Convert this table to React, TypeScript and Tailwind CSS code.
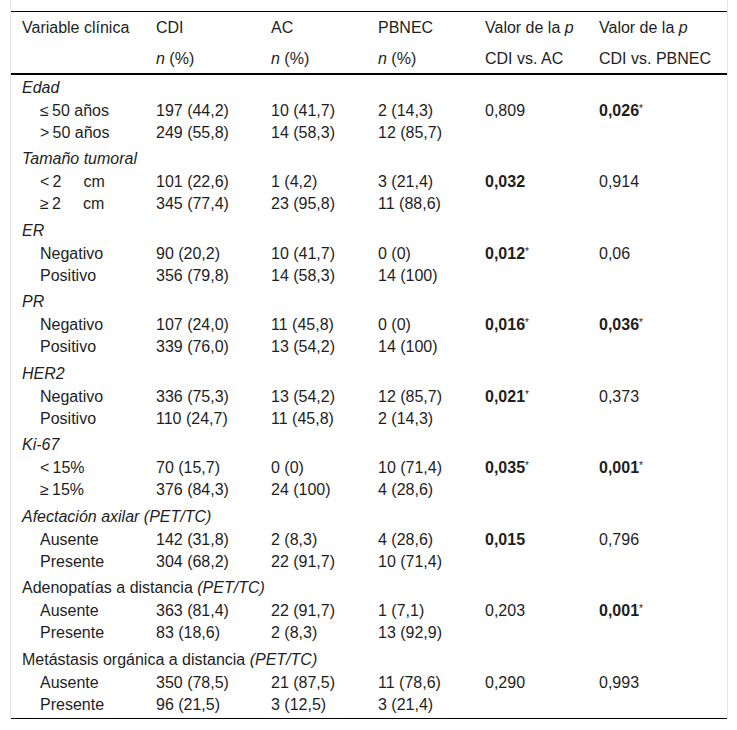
import React from "react";

type Sub = { label: React.ReactNode; v: [string, string, string]; p1?: React.ReactNode; p2?: React.ReactNode };
type Group = { cat: React.ReactNode; rows: [Sub, Sub] };

const B = ({ t, star }: { t: string; star?: boolean }) => (
  <span>
    <b className="font-bold">{t}</b>
    {star ? <span className="relative -top-[4px] text-[10px] leading-none">*</span> : null}
  </span>
);

const cm = (sym: string) => (
  <span>
    {sym}
    {"\u2009"}2<span className="ml-[22px]">cm</span>
  </span>
);

const groups: Group[] = [
  {
    cat: <i>Edad</i>,
    rows: [
      { label: "\u2264\u200950 años", v: ["197 (44,2)", "10 (41,7)", "2 (14,3)"], p1: "0,809", p2: <B t="0,026" star /> },
      { label: ">\u200950 años", v: ["249 (55,8)", "14 (58,3)", "12 (85,7)"] },
    ],
  },
  {
    cat: <i>Tamaño tumoral</i>,
    rows: [
      { label: cm("<"), v: ["101 (22,6)", "1 (4,2)", "3 (21,4)"], p1: <B t="0,032" />, p2: "0,914" },
      { label: cm("\u2265"), v: ["345 (77,4)", "23 (95,8)", "11 (88,6)"] },
    ],
  },
  {
    cat: <i>ER</i>,
    rows: [
      { label: "Negativo", v: ["90 (20,2)", "10 (41,7)", "0 (0)"], p1: <B t="0,012" star />, p2: "0,06" },
      { label: "Positivo", v: ["356 (79,8)", "14 (58,3)", "14 (100)"] },
    ],
  },
  {
    cat: <i>PR</i>,
    rows: [
      { label: "Negativo", v: ["107 (24,0)", "11 (45,8)", "0 (0)"], p1: <B t="0,016" star />, p2: <B t="0,036" star /> },
      { label: "Positivo", v: ["339 (76,0)", "13 (54,2)", "14 (100)"] },
    ],
  },
  {
    cat: <i>HER2</i>,
    rows: [
      { label: "Negativo", v: ["336 (75,3)", "13 (54,2)", "12 (85,7)"], p1: <B t="0,021" star />, p2: "0,373" },
      { label: "Positivo", v: ["110 (24,7)", "11 (45,8)", "2 (14,3)"] },
    ],
  },
  {
    cat: <i>Ki-67</i>,
    rows: [
      { label: "<\u200915%", v: ["70 (15,7)", "0 (0)", "10 (71,4)"], p1: <B t="0,035" star />, p2: <B t="0,001" star /> },
      { label: "\u2265\u200915%", v: ["376 (84,3)", "24 (100)", "4 (28,6)"] },
    ],
  },
  {
    cat: <i>Afectación axilar (PET/TC)</i>,
    rows: [
      { label: "Ausente", v: ["142 (31,8)", "2 (8,3)", "4 (28,6)"], p1: <B t="0,015" />, p2: "0,796" },
      { label: "Presente", v: ["304 (68,2)", "22 (91,7)", "10 (71,4)"] },
    ],
  },
  {
    cat: (
      <span>
        Adenopatías a distancia <i>(PET/TC)</i>
      </span>
    ),
    rows: [
      { label: "Ausente", v: ["363 (81,4)", "22 (91,7)", "1 (7,1)"], p1: "0,203", p2: <B t="0,001" star /> },
      { label: "Presente", v: ["83 (18,6)", "2 (8,3)", "13 (92,9)"] },
    ],
  },
  {
    cat: (
      <span>
        Metástasis orgánica a distancia <i>(PET/TC)</i>
      </span>
    ),
    rows: [
      { label: "Ausente", v: ["350 (78,5)", "21 (87,5)", "11 (78,6)"], p1: "0,290", p2: "0,993" },
      { label: "Presente", v: ["96 (21,5)", "3 (12,5)", "3 (21,4)"] },
    ],
  },
];

const grid = "grid grid-cols-[134px_115px_107px_107px_114px_138px]";

function Row({ s, h }: { s: Sub; h: string }) {
  return (
    <div className={`${grid} ${h} items-center`}>
      <div className="pl-[29px] whitespace-nowrap">{s.label}</div>
      <div className="pl-[11px] whitespace-nowrap">{s.v[0]}</div>
      <div className="pl-[11px] whitespace-nowrap">{s.v[1]}</div>
      <div className="pl-[11px] whitespace-nowrap">{s.v[2]}</div>
      <div className="pl-[11px] whitespace-nowrap">{s.p1}</div>
      <div className="pl-[11px] whitespace-nowrap">{s.p2}</div>
    </div>
  );
}

export default function App() {
  return (
    <div className="bg-white min-h-[730px]">
      <div
        className="ml-[10px] w-[718px] border-x border-[#e6e6e6] pt-[11px] text-[16px] text-[#1e1e1e] leading-[18px]"
        style={{ fontFamily: '"Liberation Sans", Arial, sans-serif' }}
      >
        <div className="border-t border-black">
          <div className={`${grid} h-[32px] items-center`}>
            <div className="pl-[11px] whitespace-nowrap">Variable clínica</div>
            <div className="pl-[11px]">CDI</div>
            <div className="pl-[11px]">AC</div>
            <div className="pl-[11px]">PBNEC</div>
            <div className="pl-[11px] whitespace-nowrap">
              Valor de la <i>p</i>
            </div>
            <div className="pl-[11px] whitespace-nowrap">
              Valor de la <i>p</i>
            </div>
          </div>
          <div className={`${grid} h-[31px] items-center border-b-2 border-black`}>
            <div />
            <div className="pl-[11px]">
              <i>n</i> (%)
            </div>
            <div className="pl-[11px]">
              <i>n</i> (%)
            </div>
            <div className="pl-[11px]">
              <i>n</i> (%)
            </div>
            <div className="pl-[11px] whitespace-nowrap">CDI vs. AC</div>
            <div className="pl-[11px] whitespace-nowrap">CDI vs. PBNEC</div>
          </div>
          <div className="border-b border-black">
            {groups.map((g, i) => (
              <div key={i} className={i % 2 === 1 ? "pb-[3px]" : "pb-[2px]"}>
                <div className="h-[25px] flex items-center pl-[11px] whitespace-nowrap">{g.cat}</div>
                <Row s={g.rows[0]} h="h-[22px]" />
                <Row s={g.rows[1]} h="h-[22px]" />
              </div>
            ))}
          </div>
        </div>
      </div>
    </div>
  );
}
